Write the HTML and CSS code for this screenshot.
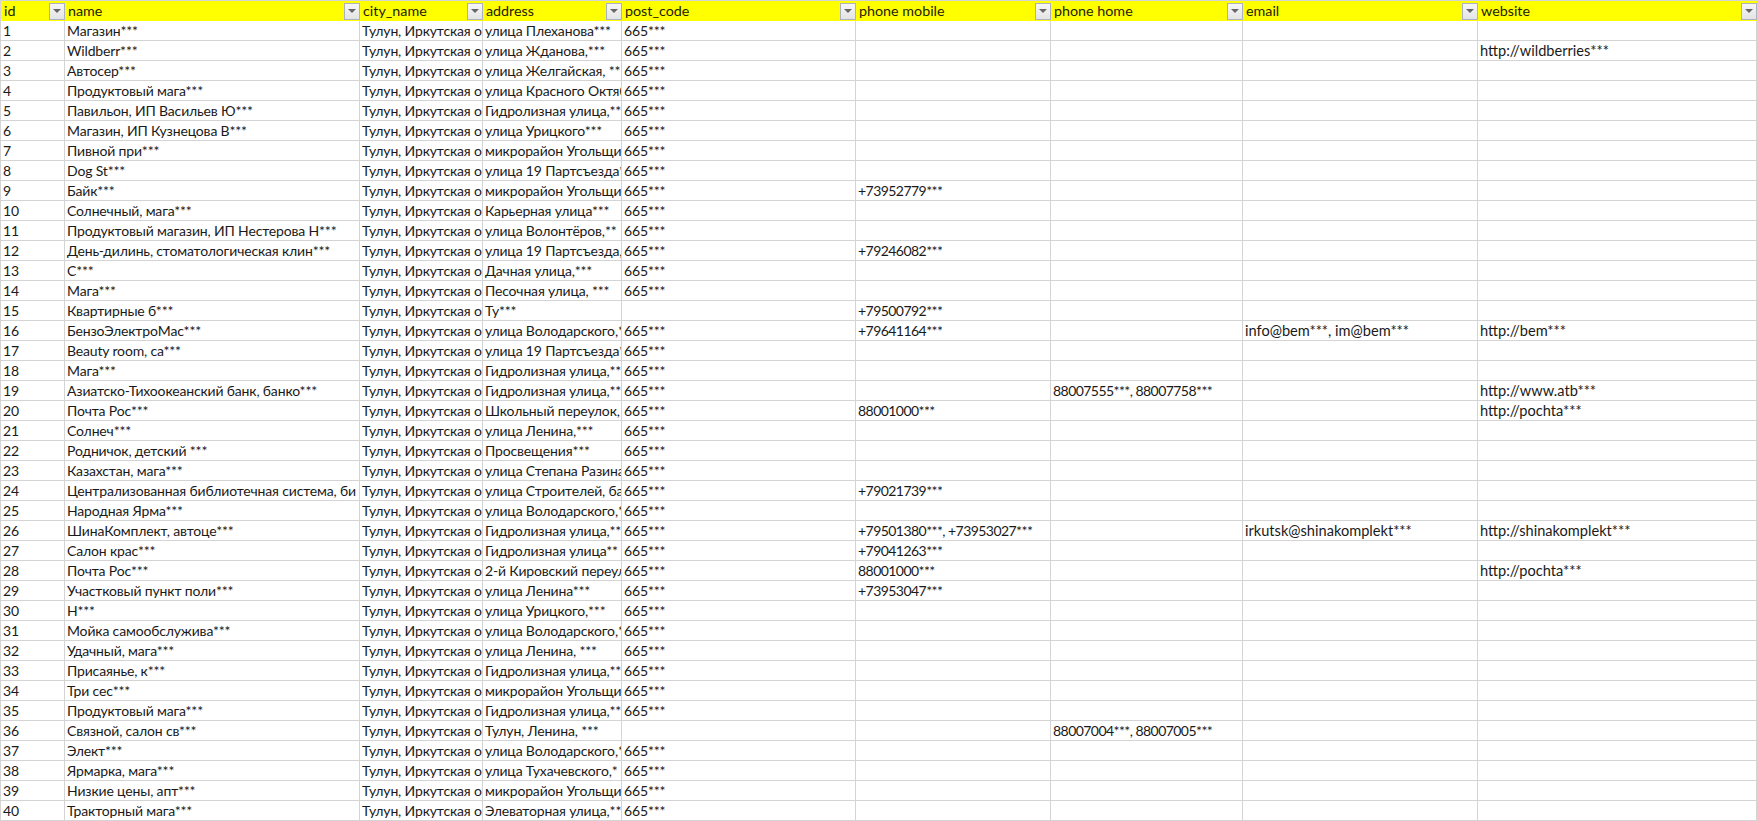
FILE: index.html
```html
<!DOCTYPE html>
<html lang="ru">
<head>
<meta charset="utf-8">
<title>Sheet</title>
<link rel="stylesheet" href="styles.css">
</head>
<body>
<table class="sheet">
<colgroup><col class="c-id"><col class="c-name"><col class="c-city"><col class="c-addr"><col class="c-post"><col class="c-mob"><col class="c-home"><col class="c-mail"><col class="c-web"></colgroup>
<thead><tr>
<th><div class="head"><span>id</span><i class="filter"></i></div></th>
<th><div class="head"><span>name</span><i class="filter"></i></div></th>
<th><div class="head"><span>city_name</span><i class="filter"></i></div></th>
<th><div class="head"><span>address</span><i class="filter"></i></div></th>
<th><div class="head"><span>post_code</span><i class="filter"></i></div></th>
<th><div class="head"><span>phone mobile</span><i class="filter"></i></div></th>
<th><div class="head"><span>phone home</span><i class="filter"></i></div></th>
<th><div class="head"><span>email</span><i class="filter"></i></div></th>
<th><div class="head"><span>website</span><i class="filter"></i></div></th>
</tr></thead>
<tbody>
<tr><td>1</td><td>Магазин***</td><td>Тулун, Иркутская о</td><td>улица Плеханова***</td><td>665***</td><td></td><td></td><td></td><td></td></tr>
<tr><td>2</td><td>Wildberr***</td><td>Тулун, Иркутская о</td><td>улица Жданова,***</td><td>665***</td><td></td><td></td><td></td><td>http://wildberries***</td></tr>
<tr><td>3</td><td>Автосер***</td><td>Тулун, Иркутская о</td><td>улица Желгайская, **</td><td>665***</td><td></td><td></td><td></td><td></td></tr>
<tr><td>4</td><td>Продуктовый мага***</td><td>Тулун, Иркутская о</td><td>улица Красного Октяб</td><td>665***</td><td></td><td></td><td></td><td></td></tr>
<tr><td>5</td><td>Павильон, ИП Васильев Ю***</td><td>Тулун, Иркутская о</td><td>Гидролизная улица,**</td><td>665***</td><td></td><td></td><td></td><td></td></tr>
<tr><td>6</td><td>Магазин, ИП Кузнецова В***</td><td>Тулун, Иркутская о</td><td>улица Урицкого***</td><td>665***</td><td></td><td></td><td></td><td></td></tr>
<tr><td>7</td><td>Пивной при***</td><td>Тулун, Иркутская о</td><td>микрорайон Угольщи</td><td>665***</td><td></td><td></td><td></td><td></td></tr>
<tr><td>8</td><td>Dog St***</td><td>Тулун, Иркутская о</td><td>улица 19 Партсъезда*</td><td>665***</td><td></td><td></td><td></td><td></td></tr>
<tr><td>9</td><td>Байк***</td><td>Тулун, Иркутская о</td><td>микрорайон Угольщи</td><td>665***</td><td>+73952779***</td><td></td><td></td><td></td></tr>
<tr><td>10</td><td>Солнечный, мага***</td><td>Тулун, Иркутская о</td><td>Карьерная улица***</td><td>665***</td><td></td><td></td><td></td><td></td></tr>
<tr><td>11</td><td>Продуктовый магазин, ИП Нестерова Н***</td><td>Тулун, Иркутская о</td><td>улица Волонтёров,**</td><td>665***</td><td></td><td></td><td></td><td></td></tr>
<tr><td>12</td><td>День-дилинь, стоматологическая клин***</td><td>Тулун, Иркутская о</td><td>улица 19 Партсъезда,</td><td>665***</td><td>+79246082***</td><td></td><td></td><td></td></tr>
<tr><td>13</td><td>С***</td><td>Тулун, Иркутская о</td><td>Дачная улица,***</td><td>665***</td><td></td><td></td><td></td><td></td></tr>
<tr><td>14</td><td>Мага***</td><td>Тулун, Иркутская о</td><td>Песочная улица, ***</td><td>665***</td><td></td><td></td><td></td><td></td></tr>
<tr><td>15</td><td>Квартирные б***</td><td>Тулун, Иркутская о</td><td>Ту***</td><td></td><td>+79500792***</td><td></td><td></td><td></td></tr>
<tr><td>16</td><td>БензоЭлектроМас***</td><td>Тулун, Иркутская о</td><td>улица Володарского,*</td><td>665***</td><td>+79641164***</td><td></td><td>info@bem***, im@bem***</td><td>http://bem***</td></tr>
<tr><td>17</td><td>Beauty room, са***</td><td>Тулун, Иркутская о</td><td>улица 19 Партсъезда*</td><td>665***</td><td></td><td></td><td></td><td></td></tr>
<tr><td>18</td><td>Мага***</td><td>Тулун, Иркутская о</td><td>Гидролизная улица,**</td><td>665***</td><td></td><td></td><td></td><td></td></tr>
<tr><td>19</td><td>Азиатско-Тихоокеанский банк, банко***</td><td>Тулун, Иркутская о</td><td>Гидролизная улица,**</td><td>665***</td><td></td><td>88007555***, 88007758***</td><td></td><td>http://www.atb***</td></tr>
<tr><td>20</td><td>Почта Рос***</td><td>Тулун, Иркутская о</td><td>Школьный переулок,</td><td>665***</td><td>88001000***</td><td></td><td></td><td>http://pochta***</td></tr>
<tr><td>21</td><td>Солнеч***</td><td>Тулун, Иркутская о</td><td>улица Ленина,***</td><td>665***</td><td></td><td></td><td></td><td></td></tr>
<tr><td>22</td><td>Родничок, детский ***</td><td>Тулун, Иркутская о</td><td>Просвещения***</td><td>665***</td><td></td><td></td><td></td><td></td></tr>
<tr><td>23</td><td>Казахстан, мага***</td><td>Тулун, Иркутская о</td><td>улица Степана Разина</td><td>665***</td><td></td><td></td><td></td><td></td></tr>
<tr><td>24</td><td>Централизованная библиотечная система, би</td><td>Тулун, Иркутская о</td><td>улица Строителей, ба</td><td>665***</td><td>+79021739***</td><td></td><td></td><td></td></tr>
<tr><td>25</td><td>Народная Ярма***</td><td>Тулун, Иркутская о</td><td>улица Володарского,*</td><td>665***</td><td></td><td></td><td></td><td></td></tr>
<tr><td>26</td><td>ШинаКомплект, автоце***</td><td>Тулун, Иркутская о</td><td>Гидролизная улица,**</td><td>665***</td><td>+79501380***, +73953027***</td><td></td><td>irkutsk@shinakomplekt***</td><td>http://shinakomplekt***</td></tr>
<tr><td>27</td><td>Салон крас***</td><td>Тулун, Иркутская о</td><td>Гидролизная улица**</td><td>665***</td><td>+79041263***</td><td></td><td></td><td></td></tr>
<tr><td>28</td><td>Почта Рос***</td><td>Тулун, Иркутская о</td><td>2-й Кировский переул</td><td>665***</td><td>88001000***</td><td></td><td></td><td>http://pochta***</td></tr>
<tr><td>29</td><td>Участковый пункт поли***</td><td>Тулун, Иркутская о</td><td>улица Ленина***</td><td>665***</td><td>+73953047***</td><td></td><td></td><td></td></tr>
<tr><td>30</td><td>Н***</td><td>Тулун, Иркутская о</td><td>улица Урицкого,***</td><td>665***</td><td></td><td></td><td></td><td></td></tr>
<tr><td>31</td><td>Мойка самообслужива***</td><td>Тулун, Иркутская о</td><td>улица Володарского,*</td><td>665***</td><td></td><td></td><td></td><td></td></tr>
<tr><td>32</td><td>Удачный, мага***</td><td>Тулун, Иркутская о</td><td>улица Ленина, ***</td><td>665***</td><td></td><td></td><td></td><td></td></tr>
<tr><td>33</td><td>Присаянье, к***</td><td>Тулун, Иркутская о</td><td>Гидролизная улица,**</td><td>665***</td><td></td><td></td><td></td><td></td></tr>
<tr><td>34</td><td>Три сес***</td><td>Тулун, Иркутская о</td><td>микрорайон Угольщи</td><td>665***</td><td></td><td></td><td></td><td></td></tr>
<tr><td>35</td><td>Продуктовый мага***</td><td>Тулун, Иркутская о</td><td>Гидролизная улица,**</td><td>665***</td><td></td><td></td><td></td><td></td></tr>
<tr><td>36</td><td>Связной, салон св***</td><td>Тулун, Иркутская о</td><td>Тулун, Ленина, ***</td><td></td><td></td><td>88007004***, 88007005***</td><td></td><td></td></tr>
<tr><td>37</td><td>Элект***</td><td>Тулун, Иркутская о</td><td>улица Володарского,*</td><td>665***</td><td></td><td></td><td></td><td></td></tr>
<tr><td>38</td><td>Ярмарка, мага***</td><td>Тулун, Иркутская о</td><td>улица Тухачевского,*</td><td>665***</td><td></td><td></td><td></td><td></td></tr>
<tr><td>39</td><td>Низкие цены, апт***</td><td>Тулун, Иркутская о</td><td>микрорайон Угольщи</td><td>665***</td><td></td><td></td><td></td><td></td></tr>
<tr><td>40</td><td>Тракторный мага***</td><td>Тулун, Иркутская о</td><td>Элеваторная улица,**</td><td>665***</td><td></td><td></td><td></td><td></td></tr>
</tbody>
</table>
</body>
</html>
```
FILE: styles.css
```css
html, body {
  margin: 0;
  padding: 0;
  background: #ffffff;
  overflow: hidden;
}
.sheet {
  border-collapse: separate;
  border-spacing: 0;
  table-layout: fixed;
  width: 1757px;
  font-family: Lato, "Open Sans", "Noto Sans", sans-serif;
  font-size: 14px;
  letter-spacing: -0.16px;
  color: #1a1a1a;
  border-top: 1px solid #d4d4d4;
  border-left: 1px solid #d4d4d4;
}
.c-id { width: 64px; }
.c-name { width: 295px; }
.c-city { width: 123px; }
.c-addr { width: 139px; }
.c-post { width: 234px; }
.c-mob { width: 195px; }
.c-home { width: 192px; }
.c-mail { width: 235px; }
.c-web { width: 279px; }
th, td {
  box-sizing: border-box;
  height: 20px;
  padding: 1px 0 0 2px;
  overflow: hidden;
  white-space: nowrap;
  text-align: left;
  font-weight: 400;
  line-height: 18px;
  border-right: 1px solid #d4d4d4;
  border-bottom: 1px solid #d4d4d4;
}
td:nth-child(6), td:nth-child(7) {
  letter-spacing: -0.55px;
}
td:nth-child(8), td:nth-child(9) {
  font-size: 14.6px;
  letter-spacing: 0;
}
th {
  background: #ffff00;
  border-right: 0;
  border-bottom: 0;
  padding: 0 0 0 3px;
  color: #222200;
  font-size: 14.3px;
  letter-spacing: 0;
}
.head {
  display: flex;
  align-items: center;
  justify-content: space-between;
  height: 20px;
}
.filter {
  box-sizing: border-box;
  flex: none;
  width: 16px;
  height: 17px;
  display: flex;
  align-items: center;
  justify-content: center;
  background: linear-gradient(#f6f6f6, #e4e4e4);
  border: 1px solid #aab2c0;
}
.filter::after {
  content: "";
  width: 0;
  height: 0;
  border-left: 4px solid transparent;
  border-right: 4px solid transparent;
  border-top: 4px solid #666666;
}
```
